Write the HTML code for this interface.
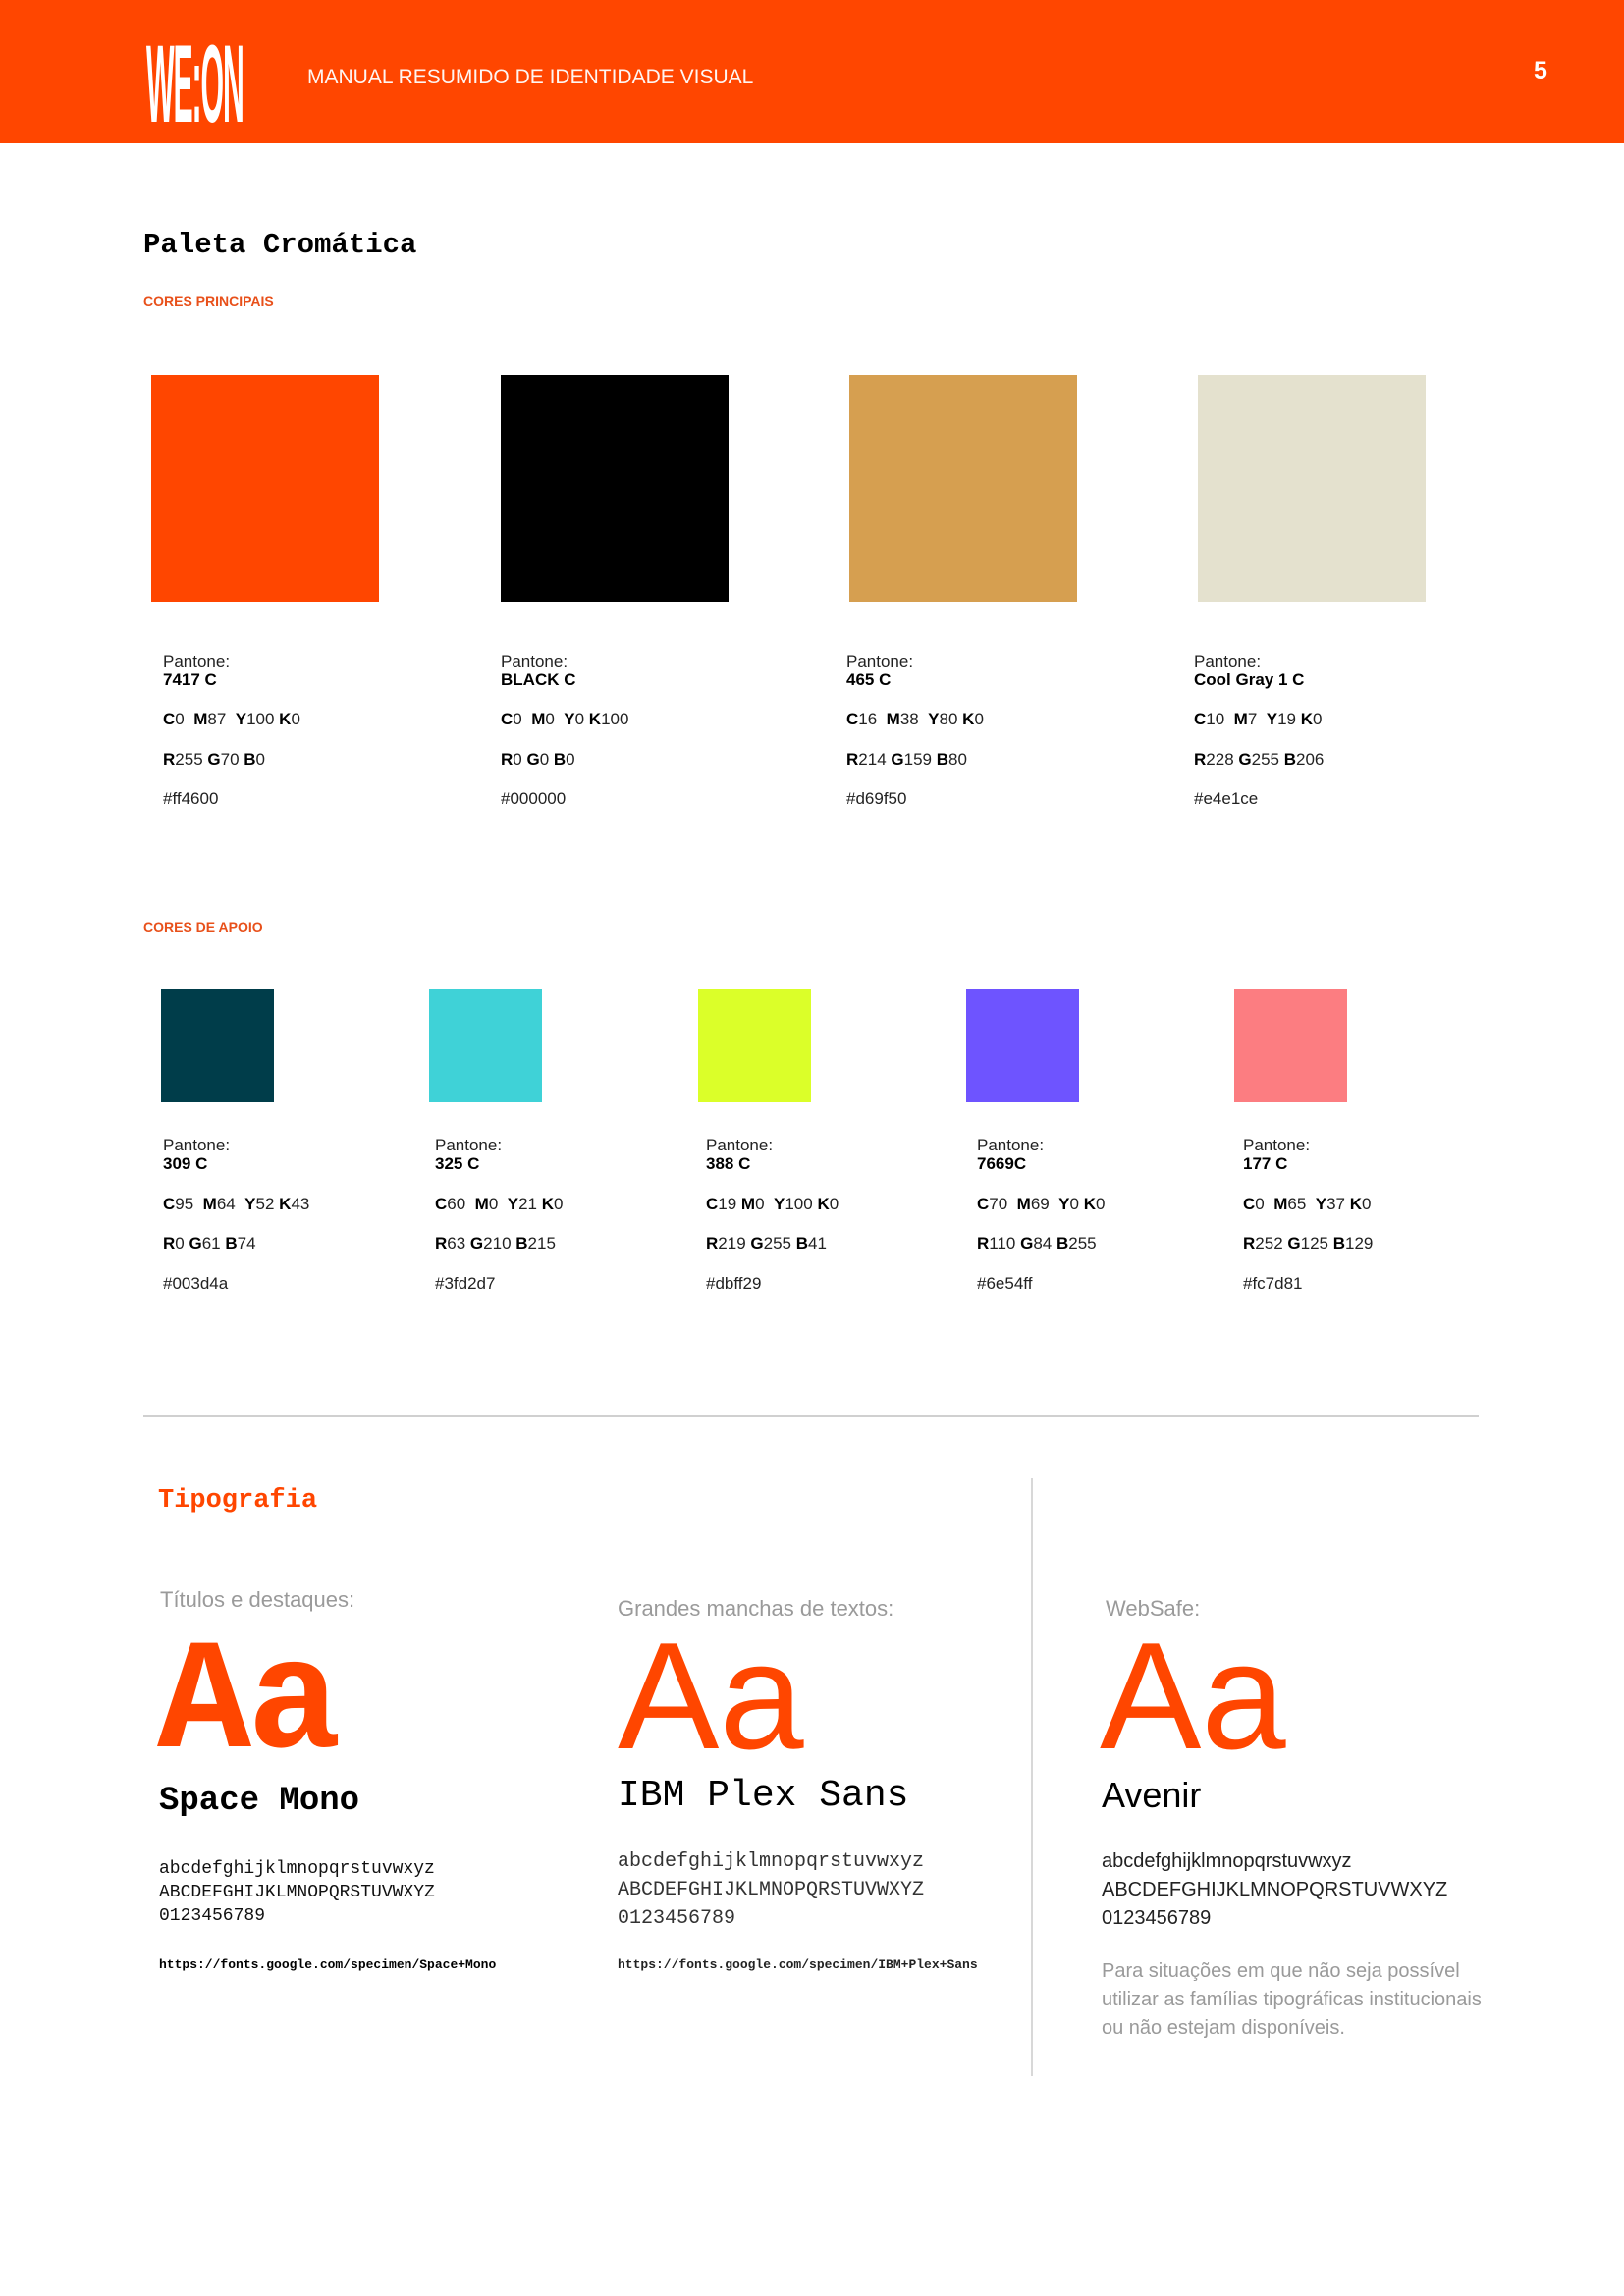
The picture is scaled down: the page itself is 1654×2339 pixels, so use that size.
<!DOCTYPE html>
<html><head><meta charset="utf-8"><style>
*{margin:0;padding:0;box-sizing:border-box}
body{width:1654px;height:2339px;background:#fff;position:relative;font-family:"Liberation Sans",sans-serif;overflow:hidden}
.a{position:absolute;white-space:nowrap}
.hdr{position:absolute;left:0;top:0;width:1654px;height:146px;background:#ff4600}
.sw{position:absolute}
.t{font-size:17px;color:#222;line-height:1}
.t b{color:#000}
.mono{font-family:"Liberation Mono",monospace}
.lab{font-size:14px;color:#e8501a;font-weight:bold;letter-spacing:0}
.gray{color:#9a9a9a}
.or{color:#ff4600}
</style></head><body>
<div class="hdr"></div>
<div class="a" style="left:149px;top:30px;color:#fff;font-weight:bold;font-size:112px;line-height:112px;transform:scaleX(0.27);transform-origin:left top;letter-spacing:-4px">WE:ON</div>
<div class="a" style="left:313px;top:67px;color:#fff;font-size:21px;opacity:.95">MANUAL RESUMIDO DE IDENTIDADE VISUAL</div>
<div class="a" style="left:1562px;top:58px;color:#fff;font-size:25px;font-weight:bold">5</div>

<div class="a mono" style="left:146px;top:233px;font-size:29px;font-weight:bold;color:#000">Paleta Cromática</div>
<div class="a lab" style="left:146px;top:299px">CORES PRINCIPAIS</div>

<div class="sw" style="left:154px;top:382px;width:232px;height:231px;background:#ff4600"></div>
<div class="sw" style="left:510px;top:382px;width:232px;height:231px;background:#000"></div>
<div class="sw" style="left:865px;top:382px;width:232px;height:231px;background:#d69f50"></div>
<div class="sw" style="left:1220px;top:382px;width:232px;height:231px;background:#e4e1ce"></div>

<div class="a t" style="left:166px;top:665px">Pantone:<br><b style="line-height:22px">7417 C</b></div>
<div class="a t" style="left:166px;top:724px"><b>C</b>0&nbsp; <b>M</b>87&nbsp; <b>Y</b>100 <b>K</b>0</div>
<div class="a t" style="left:166px;top:765px"><b>R</b>255 <b>G</b>70 <b>B</b>0</div>
<div class="a t" style="left:166px;top:805px">#ff4600</div>

<div class="a t" style="left:510px;top:665px">Pantone:<br><b style="line-height:22px">BLACK C</b></div>
<div class="a t" style="left:510px;top:724px"><b>C</b>0&nbsp; <b>M</b>0&nbsp; <b>Y</b>0 <b>K</b>100</div>
<div class="a t" style="left:510px;top:765px"><b>R</b>0 <b>G</b>0 <b>B</b>0</div>
<div class="a t" style="left:510px;top:805px">#000000</div>

<div class="a t" style="left:862px;top:665px">Pantone:<br><b style="line-height:22px">465 C</b></div>
<div class="a t" style="left:862px;top:724px"><b>C</b>16&nbsp; <b>M</b>38&nbsp; <b>Y</b>80 <b>K</b>0</div>
<div class="a t" style="left:862px;top:765px"><b>R</b>214 <b>G</b>159 <b>B</b>80</div>
<div class="a t" style="left:862px;top:805px">#d69f50</div>

<div class="a t" style="left:1216px;top:665px">Pantone:<br><b style="line-height:22px">Cool Gray 1 C</b></div>
<div class="a t" style="left:1216px;top:724px"><b>C</b>10&nbsp; <b>M</b>7&nbsp; <b>Y</b>19 <b>K</b>0</div>
<div class="a t" style="left:1216px;top:765px"><b>R</b>228 <b>G</b>255 <b>B</b>206</div>
<div class="a t" style="left:1216px;top:805px">#e4e1ce</div>

<div class="a lab" style="left:146px;top:936px">CORES DE APOIO</div>

<div class="sw" style="left:164px;top:1008px;width:115px;height:115px;background:#003d4a"></div>
<div class="sw" style="left:437px;top:1008px;width:115px;height:115px;background:#3fd2d7"></div>
<div class="sw" style="left:711px;top:1008px;width:115px;height:115px;background:#dbff29"></div>
<div class="sw" style="left:984px;top:1008px;width:115px;height:115px;background:#6e54ff"></div>
<div class="sw" style="left:1257px;top:1008px;width:115px;height:115px;background:#fc7d81"></div>

<div class="a t" style="left:166px;top:1158px">Pantone:<br><b style="line-height:22px">309 C</b></div>
<div class="a t" style="left:166px;top:1218px"><b>C</b>95&nbsp; <b>M</b>64&nbsp; <b>Y</b>52 <b>K</b>43</div>
<div class="a t" style="left:166px;top:1258px"><b>R</b>0 <b>G</b>61 <b>B</b>74</div>
<div class="a t" style="left:166px;top:1299px">#003d4a</div>

<div class="a t" style="left:443px;top:1158px">Pantone:<br><b style="line-height:22px">325 C</b></div>
<div class="a t" style="left:443px;top:1218px"><b>C</b>60&nbsp; <b>M</b>0&nbsp; <b>Y</b>21 <b>K</b>0</div>
<div class="a t" style="left:443px;top:1258px"><b>R</b>63 <b>G</b>210 <b>B</b>215</div>
<div class="a t" style="left:443px;top:1299px">#3fd2d7</div>

<div class="a t" style="left:719px;top:1158px">Pantone:<br><b style="line-height:22px">388 C</b></div>
<div class="a t" style="left:719px;top:1218px"><b>C</b>19 <b>M</b>0&nbsp; <b>Y</b>100 <b>K</b>0</div>
<div class="a t" style="left:719px;top:1258px"><b>R</b>219 <b>G</b>255 <b>B</b>41</div>
<div class="a t" style="left:719px;top:1299px">#dbff29</div>

<div class="a t" style="left:995px;top:1158px">Pantone:<br><b style="line-height:22px">7669C</b></div>
<div class="a t" style="left:995px;top:1218px"><b>C</b>70&nbsp; <b>M</b>69&nbsp; <b>Y</b>0 <b>K</b>0</div>
<div class="a t" style="left:995px;top:1258px"><b>R</b>110 <b>G</b>84 <b>B</b>255</div>
<div class="a t" style="left:995px;top:1299px">#6e54ff</div>

<div class="a t" style="left:1266px;top:1158px">Pantone:<br><b style="line-height:22px">177 C</b></div>
<div class="a t" style="left:1266px;top:1218px"><b>C</b>0&nbsp; <b>M</b>65&nbsp; <b>Y</b>37 <b>K</b>0</div>
<div class="a t" style="left:1266px;top:1258px"><b>R</b>252 <b>G</b>125 <b>B</b>129</div>
<div class="a t" style="left:1266px;top:1299px">#fc7d81</div>

<div class="a" style="left:146px;top:1442px;width:1360px;height:2px;background:#d0d0d0"></div>
<div class="a" style="left:1050px;top:1506px;width:2px;height:609px;background:#d8d8d8"></div>

<div class="a mono or" style="left:161px;top:1514px;font-size:27px;font-weight:bold">Tipografia</div>

<div class="a gray" style="left:163px;top:1617px;font-size:22px">Títulos e destaques:</div>
<div class="a gray" style="left:629px;top:1626px;font-size:22px">Grandes manchas de textos:</div>
<div class="a gray" style="left:1126px;top:1626px;font-size:22px">WebSafe:</div>

<div class="a mono or" style="left:160px;top:1658px;font-size:160px;font-weight:bold;line-height:1;letter-spacing:-4px">Aa</div>
<div class="a or" style="left:629px;top:1650px;font-size:155px;line-height:1">Aa</div>
<div class="a or" style="left:1120px;top:1650px;font-size:155px;line-height:1">Aa</div>

<div class="a mono" style="left:162px;top:1816px;font-size:34px;font-weight:bold;color:#000">Space Mono</div>
<div class="a mono" style="left:629px;top:1808px;font-size:38px;color:#000">IBM Plex Sans</div>
<div class="a" style="left:1122px;top:1808px;font-size:36px;color:#000">Avenir</div>

<div class="a mono" style="left:162px;top:1892px;font-size:18px;line-height:24px;color:#111">abcdefghijklmnopqrstuvwxyz<br>ABCDEFGHIJKLMNOPQRSTUVWXYZ<br>0123456789</div>
<div class="a mono" style="left:629px;top:1882px;font-size:20px;line-height:29px;color:#333">abcdefghijklmnopqrstuvwxyz<br>ABCDEFGHIJKLMNOPQRSTUVWXYZ<br>0123456789</div>
<div class="a" style="left:1122px;top:1882px;font-size:20px;line-height:29px;color:#222">abcdefghijklmnopqrstuvwxyz<br>ABCDEFGHIJKLMNOPQRSTUVWXYZ<br>0123456789</div>

<div class="a mono" style="left:162px;top:1994px;font-size:13px;font-weight:bold;color:#000">https://fonts.google.com/specimen/Space+Mono</div>
<div class="a mono" style="left:629px;top:1994px;font-size:13px;font-weight:bold;color:#222">https://fonts.google.com/specimen/IBM+Plex+Sans</div>

<div class="a gray" style="left:1122px;top:1994px;font-size:20px;line-height:29px">Para situações em que não seja possível<br>utilizar as famílias tipográficas institucionais<br>ou não estejam disponíveis.</div>
</body></html>
